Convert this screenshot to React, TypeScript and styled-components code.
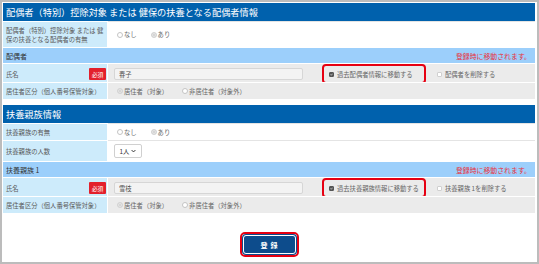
import React from "react";
import styled, { createGlobalStyle } from "styled-components";

const GlobalStyle = createGlobalStyle`
  html, body {
    margin: 0;
    padding: 0;
    background: #ffffff;
  }
  body {
    font-family: "Noto Sans CJK JP", "Noto Sans", sans-serif;
  }
`;

const Frame = styled.div`
  width: 539px;
  height: 264px;
  box-sizing: border-box;
  border: 2px solid #bcbcbc;
  padding: 1px 2px 0 1px;
  display: flex;
  flex-direction: column;
`;

const Section = styled.div`
  display: flex;
  flex-direction: column;
  margin-bottom: ${(p: { gap?: number }) => p.gap || 0}px;
`;

const SectionHeader = styled.div`
  height: 18px;
  background: #0061ad;
  color: #ffffff;
  font-size: 9.2px;
  padding-left: 3px;
  display: flex;
  align-items: center;
`;

const SubHeader = styled.div`
  height: 16px;
  box-sizing: border-box;
  border-top: 1px solid #ffffff;
  background: #9ccffb;
  color: #333333;
  font-size: 7px;
  padding: 0 4px 0 3px;
  display: flex;
  align-items: center;
  justify-content: space-between;
`;

const Notice = styled.span`
  color: #e8313c;
  font-size: 6.9px;
`;

const Row = styled.div<{ h: number }>`
  display: grid;
  grid-template-columns: 104px 1fr;
  column-gap: 1px;
  height: ${(p) => p.h}px;
`;

const Label = styled.div`
  box-sizing: border-box;
  border-top: 1px solid #ffffff;
  background: #cdebfb;
  color: #5a5a5a;
  font-size: 6.3px;
  line-height: 9px;
  padding: 0 1px 0 3px;
  display: flex;
  align-items: center;
  justify-content: space-between;
`;

const Value = styled.div<{ shaded?: boolean }>`
  box-sizing: border-box;
  border-top: 1px solid ${(p) => (p.shaded ? "#ffffff" : "#e4e4e4")};
  background: ${(p) => (p.shaded ? "#ebebeb" : "#ffffff")};
  display: flex;
  align-items: center;
  padding-left: 6px;
`;

const Badge = styled.span`
  width: 17px;
  height: 12px;
  background: #e3202c;
  color: #ffffff;
  font-size: 5.8px;
  border-radius: 1px;
  display: flex;
  align-items: center;
  justify-content: center;
`;

const RadioOption = styled.span`
  display: inline-flex;
  align-items: center;
  gap: 1px;
  font-size: 6.3px;
  color: #666666;
  margin: 0 11px 0 3px;
`;

const RadioDot = styled.span<{ checked?: boolean }>`
  width: 4px;
  height: 4px;
  border-radius: 50%;
  border: 1px solid ${(p) => (p.checked ? "#d4d4d4" : "#c4c4c4")};
  background: ${(p) => (p.checked ? "#d0d0d0" : "#ffffff")};
  box-shadow: ${(p) => (p.checked ? "inset 0 0 0 1px #e8e8e8" : "none")};
`;

const TextField = styled.input`
  width: 189px;
  height: 12px;
  box-sizing: border-box;
  border: 1px solid #d6d6d6;
  border-radius: 2px;
  background: #f3f3f3;
  color: #555555;
  font-family: inherit;
  font-size: 6.3px;
  padding: 0 4px;
  margin: 0;
  outline: none;
`;

const CheckOption = styled.span<{ highlight?: boolean }>`
  display: inline-flex;
  align-items: center;
  gap: 3px;
  font-size: 6.3px;
  color: #666666;
  box-sizing: border-box;
  height: 20px;
  width: ${(p) => (p.highlight ? "104px" : "auto")};
  padding: 0 5px;
  border: 2px solid ${(p) => (p.highlight ? "#e60012" : "transparent")};
  border-radius: 4px;
  margin-left: ${(p) => (p.highlight ? 19 : 4)}px;
`;

const CheckBox = styled.span<{ checked?: boolean }>`
  width: 5px;
  height: 5px;
  box-sizing: border-box;
  border-radius: 1px;
  border: 1px solid ${(p) => (p.checked ? "#555555" : "#d0d0d0")};
  background: ${(p) => (p.checked ? "#555555" : "#ffffff")};
  display: inline-flex;
  align-items: center;
  justify-content: center;
`;

const SelectBox = styled.span`
  width: 28px;
  height: 14px;
  box-sizing: border-box;
  border: 1px solid #d0d0d0;
  border-radius: 2px;
  background: #ffffff;
  display: inline-flex;
  align-items: center;
  justify-content: center;
  gap: 2px;
  font-size: 6.3px;
  color: #333333;
`;

const Footer = styled.div`
  display: flex;
  justify-content: center;
  margin-top: 19px;
`;

const ButtonRing = styled.div`
  border: 2px solid #e60012;
  border-radius: 5px;
  padding: 1px;
  display: flex;
`;

const SubmitButton = styled.button`
  width: 53px;
  height: 19px;
  box-sizing: border-box;
  background: #0d4c8c;
  border: 1px solid #ffffff;
  border-radius: 3px;
  box-shadow: 0 0 0 1px #0d4c8c;
  color: #ffffff;
  font-family: inherit;
  font-size: 7px;
  font-weight: bold;
  letter-spacing: 3px;
  padding: 0 0 0 3px;
  margin: 0;
`;

const Check = () => (
  <svg width="3" height="3" viewBox="0 0 6 6">
    <path d="M1 3 L2.5 4.5 L5 1.5" fill="none" stroke="#fff" strokeWidth="1.2" />
  </svg>
);

const Chevron = () => (
  <svg width="5" height="4" viewBox="0 0 8 6">
    <path d="M1 1.5 L4 4.5 L7 1.5" fill="none" stroke="#333" strokeWidth="1.6" />
  </svg>
);

function Radios(props: { options: string[]; selected: number }) {
  const { options, selected } = props;
  return (
    <>
      {options.map((o, i) => (
        <RadioOption key={o}>
          <RadioDot checked={i === selected} />
          {o}
        </RadioOption>
      ))}
    </>
  );
}

function PersonRows(props: { name: string; moveText: string; deleteText: string }) {
  const { name, moveText, deleteText } = props;
  return (
    <>
      <Row h={19}>
        <Label>
          氏名
          <Badge>必須</Badge>
        </Label>
        <Value shaded>
          <TextField readOnly value={name} />
          <CheckOption highlight>
            <CheckBox checked>
              <Check />
            </CheckBox>
            {moveText}
          </CheckOption>
          <CheckOption>
            <CheckBox />
            {deleteText}
          </CheckOption>
        </Value>
      </Row>
      <Row h={17}>
        <Label>居住者区分（個人番号保管対象）</Label>
        <Value shaded>
          <Radios options={["居住者（対象）", "非居住者（対象外）"]} selected={0} />
        </Value>
      </Row>
    </>
  );
}

export default function App() {
  return (
    <>
      <GlobalStyle />
      <Frame>
        <Section gap={6}>
          <SectionHeader>配偶者（特別）控除対象 または 健保の扶養となる配偶者情報</SectionHeader>
          <Row h={26}>
            <Label>配偶者（特別）控除対象 または 健保の扶養となる配偶者の有無</Label>
            <Value>
              <Radios options={["なし", "あり"]} selected={1} />
            </Value>
          </Row>
          <SubHeader>
            配偶者
            <Notice>登録時に移動されます。</Notice>
          </SubHeader>
          <PersonRows name="春子" moveText="過去配偶者情報に移動する" deleteText="配偶者を削除する" />
        </Section>
        <Section>
          <SectionHeader>扶養親族情報</SectionHeader>
          <Row h={17}>
            <Label>扶養親族の有無</Label>
            <Value>
              <Radios options={["なし", "あり"]} selected={1} />
            </Value>
          </Row>
          <Row h={21}>
            <Label>扶養親族の人数</Label>
            <Value>
              <SelectBox>
                1人
                <Chevron />
              </SelectBox>
            </Value>
          </Row>
          <SubHeader>
            扶養親族 1
            <Notice>登録時に移動されます。</Notice>
          </SubHeader>
          <PersonRows name="雪枝" moveText="過去扶養親族情報に移動する" deleteText="扶養親族 1を削除する" />
        </Section>
        <Footer>
          <ButtonRing>
            <SubmitButton>登録</SubmitButton>
          </ButtonRing>
        </Footer>
      </Frame>
    </>
  );
}
